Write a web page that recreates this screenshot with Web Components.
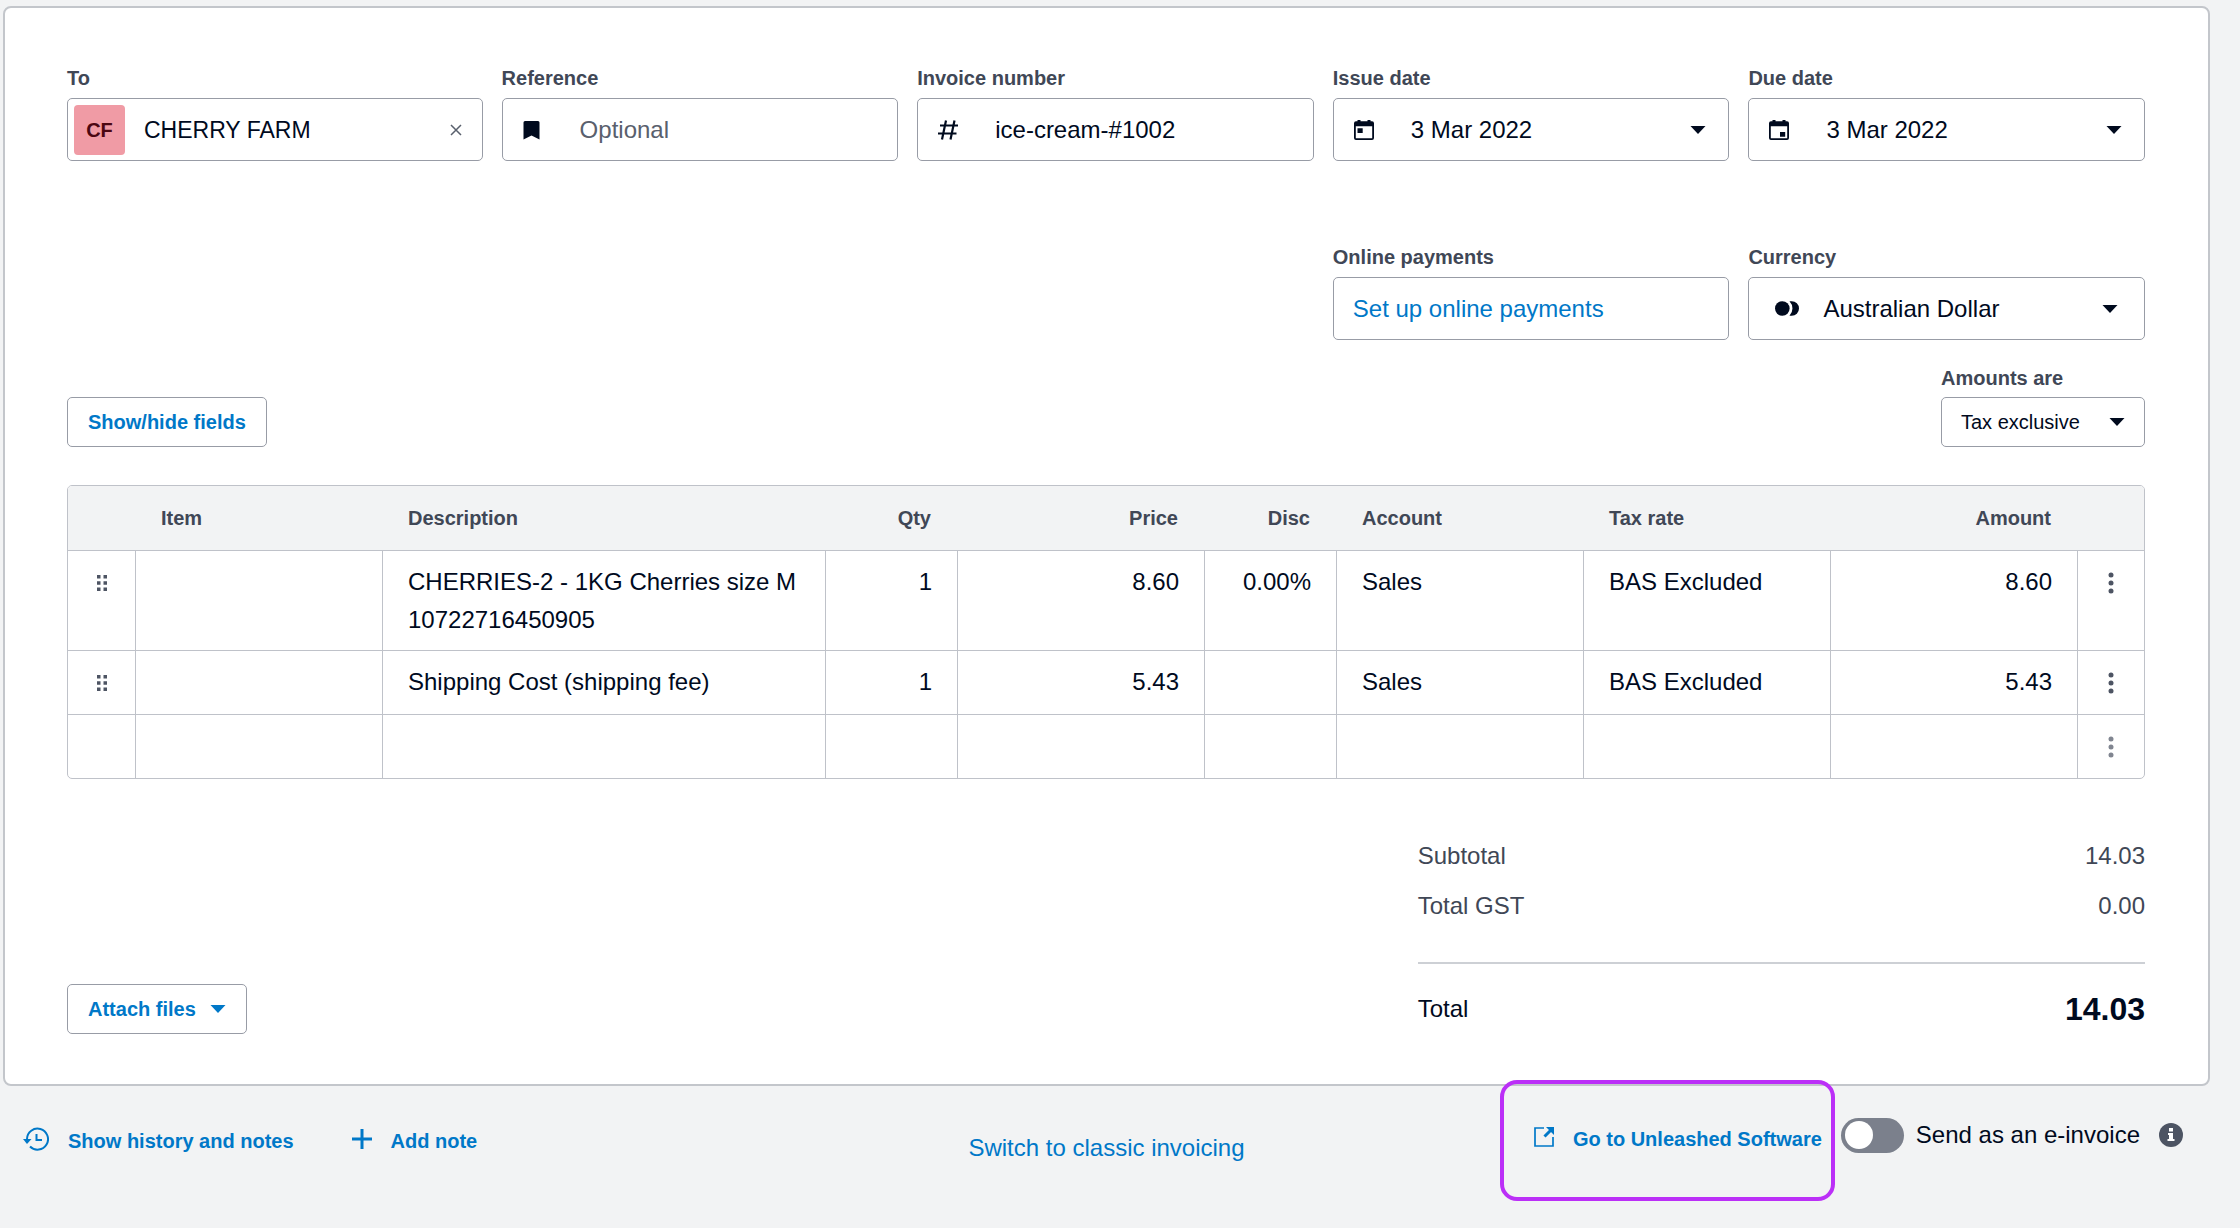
<!DOCTYPE html>
<html lang="en">
<head>
<meta charset="utf-8">
<meta name="viewport" content="width=device-width, initial-scale=1">
<title>Edit invoice</title>
<style>
  html {
    --ink: #000a1e;
    --label: #404756;
    --muted: #59606d;
    --blue: #0078c8;
    --field-line: #989ca6;
    --line: #bfc2c9;
    --surface: #f2f3f4;
    background: var(--surface);
  }
  body {
    margin: 0;
    font: 24px/38px "Liberation Sans", Arial, Helvetica, sans-serif;
    color: var(--ink);
  }
</style>
</head>
<body>
<invoice-page></invoice-page>

<script>
const ICONS = {
  bookmark: [17, 20, '<path fill="currentColor" d="M2 1h13a1.500 1.500 0 0 1 1.500 1.500V19.500L8.500 15.500 0.500 19.500V2.500A1.500 1.500 0 0 1 2 1z"/>'],
  hash: [20, 20, '<path fill="none" stroke="currentColor" stroke-width="2.200" d="M8 0.500 4 19.500M16.500 0.500 12.500 19.500M2 5.500h18M0 13.500h18.500"/>'],
  calendarStart: [20, 20, '<path fill="currentColor" fill-rule="evenodd" d="M3.500 0h3v1.300h7V0h3v1.300H18a2 2 0 0 1 2 2V18a2 2 0 0 1-2 2H2a2 2 0 0 1-2-2V3.300a2 2 0 0 1 2-2h1.500zM1.800 6.300v11.900h16.400V6.300zM3.500 8.300h5.200v4.700H3.500z"/>'],
  calendarEnd: [20, 20, '<path fill="currentColor" fill-rule="evenodd" d="M3.500 0h3v1.300h7V0h3v1.300H18a2 2 0 0 1 2 2V18a2 2 0 0 1-2 2H2a2 2 0 0 1-2-2V3.300a2 2 0 0 1 2-2h1.500zM1.800 6.300v11.900h16.400V6.300zM11 12h5.200v4.700H11z"/>'],
  coins: [24, 15, '<circle cx="7.300" cy="7.500" r="7.300" fill="currentColor"/><path fill="currentColor" d="M14.500 0.200h2.200a7.300 7.300 0 0 1 0 14.600h-2.200a10.500 10.500 0 0 0 0-14.600z"/>'],
  caret: [16, 8, '<path fill="currentColor" d="M0.500 0h15L8 8z"/>'],
  cross: [12, 12, '<path fill="none" stroke="currentColor" stroke-width="1.500" d="M1 1l10 10M11 1 1 11"/>'],
  grip: [10, 18, '<path fill="currentColor" d="M0 1h3.500v3.500H0zM6.500 1H10v3.500H6.500zM0 7.250h3.500v3.500H0zM6.500 7.250H10v3.500H6.500zM0 13.500h3.500V17H0zM6.500 13.500H10V17H6.500z"/>'],
  dots: [6, 22, '<circle cx="3" cy="3" r="2.500" fill="currentColor"/><circle cx="3" cy="11" r="2.500" fill="currentColor"/><circle cx="3" cy="19" r="2.500" fill="currentColor"/>'],
  history: [26, 28, '<path fill="none" stroke="currentColor" stroke-width="2" d="M4 13.500V12A10.500 10.500 0 1 1 7 19.500M13.500 7v6H19"/><path fill="currentColor" d="M0 12h8.500L4 17z"/>'],
  plus: [20, 24, '<path fill="none" stroke="currentColor" stroke-width="3" d="M10 0v20M0 10h20"/>'],
  external: [20, 24, '<path fill="none" stroke="currentColor" stroke-width="1.700" d="M10 1H1v18h18V10"/><path fill="none" stroke="currentColor" stroke-width="3" d="M10.500 9.500 17 3"/><path fill="currentColor" d="M12 0h8v8z"/>'],
  info: [24, 24, '<circle cx="12" cy="12" r="12" fill="currentColor"/><path fill="#fff" d="M10 5h4v3.500h-4zM9 10h5v6h1.500v2H8.500v-2H10v-4H9z"/>']
};

class UiElement extends HTMLElement {
  connectedCallback() {
    if (this.shadowRoot) return;
    this.attachShadow({ mode: 'open' }).innerHTML = this.render();
  }
  attr(name) { return this.getAttribute(name) || ''; }
}

customElements.define('ui-icon', class extends UiElement {
  render() {
    const [w, h, body] = ICONS[this.attr('name')];
    return `<style>:host{display:inline-flex;flex:none}svg{display:block}</style>
      <svg width="${w}" height="${h}" viewBox="0 0 ${w} ${h}" aria-hidden="true">${body}</svg>`;
  }
});

/* Labelled form field. kind: text | select | contact | link */
customElements.define('ui-field', class extends UiElement {
  control() {
    const value = this.attr('value');
    if (this.attr('kind') === 'select')
      return `<select id="c"><option>${value}</option></select>`;
    if (this.attr('kind') === 'link')
      return `<a id="c" href="#" aria-labelledby="l">${value}</a>`;
    return `<input id="c" type="text" value="${value}" placeholder="${this.attr('placeholder')}">`;
  }
  render() {
    const contact = this.attr('kind') === 'contact';
    const icon = this.attr('icon');
    return `<style>
      :host{display:flex;flex-direction:column;gap:6px;min-width:0}
      label{font-size:20px;line-height:28px;font-weight:bold;color:var(--label)}
      .box{box-sizing:border-box;display:grid;grid-template-columns:20px 58px minmax(0,1fr) auto 22px;
        align-items:center;height:63px;border:1px solid var(--field-line);border-radius:5px;background:#fff}
      .lead{grid-area:1/2;pointer-events:none;z-index:1}
      .tail{grid-area:1/4;pointer-events:none;z-index:1}
      #c{grid-area:1/1/2/6;align-self:stretch;box-sizing:border-box;width:100%;min-width:0;margin:0;border:0;
        background:none;font:inherit;color:inherit;padding:0 48px 0 19px;border-radius:5px;appearance:none}
      .icon #c{padding-left:77px}
      input::placeholder{color:var(--muted);opacity:1}
      a{display:flex;align-items:center}
      a#c{color:var(--blue);text-decoration:none}
      .contact{grid-template-columns:6px 51px minmax(0,1fr) auto 20px}
      .contact #c{padding-left:76px;font-size:23px}
      .avatar{grid-area:1/2;height:50px;border-radius:4px;background:#f09ba5;color:#4b0712;
        font-size:20px;line-height:50px;font-weight:bold;text-align:center}
      .clear{grid-area:1/4;border:0;background:none;padding:0;color:var(--muted);display:flex;z-index:1}
      :host([kind=select]) .box{grid-template-columns:26px 52px minmax(0,1fr) auto 26px}
      :host([kind=select]) .icon #c{padding-left:74px}
      :host([size=small]) .box{height:50px;grid-template-columns:19px 0 minmax(0,1fr) auto 19px}
      :host([size=small]) #c{font-size:20px}
      :host([size=small]){gap:5px}
      </style>
      <label for="c" id="l">${this.attr('label')}</label>
      <div class="box ${icon ? 'icon' : ''} ${contact ? 'contact' : ''}">
        ${contact ? `<span class="avatar" aria-hidden="true">${this.attr('initials')}</span>` : ''}
        ${icon ? `<ui-icon class="lead" name="${icon}"></ui-icon>` : ''}
        ${this.control()}
        ${contact ? '<button class="clear" type="button" aria-label="Clear contact"><ui-icon name="cross"></ui-icon></button>' : ''}
        ${this.hasAttribute('caret') ? '<ui-icon class="tail" name="caret"></ui-icon>' : ''}
      </div>`;
  }
});

customElements.define('ui-button', class extends UiElement {
  render() {
    return `<style>:host{display:inline-flex}
      button{box-sizing:border-box;display:flex;align-items:center;gap:14px;height:50px;padding:0 20px;
        border:1px solid var(--field-line);border-radius:5px;background:#fff;color:var(--blue);
        font:bold 20px/28px "Liberation Sans",Arial,sans-serif}
      </style><button type="button"><slot></slot></button>`;
  }
});

customElements.define('ui-link', class extends UiElement {
  render() {
    return `<style>:host{display:inline-flex}
      a{display:flex;align-items:center;gap:19px;color:var(--blue);text-decoration:none;
        font-size:20px;line-height:28px;font-weight:bold}
      </style><a href="#"><ui-icon name="${this.attr('icon')}"></ui-icon><slot></slot></a>`;
  }
});

customElements.define('invoice-lines', class extends UiElement {
  render() {
    const lines = [
      { description: 'CHERRIES-2 - 1KG Cherries size M<br>10722716450905', qty: '1', price: '8.60', disc: '0.00%', account: 'Sales', tax: 'BAS Excluded', amount: '8.60' },
      { description: 'Shipping Cost (shipping fee)', qty: '1', price: '5.43', disc: '', account: 'Sales', tax: 'BAS Excluded', amount: '5.43' },
      null
    ];
    const row = l => {
      const v = l || { description: '', qty: '', price: '', disc: '', account: '', tax: '', amount: '' };
      return `<tr class="${l ? '' : 'blank'}">
        <td class="tool">${l ? '<button type="button" aria-label="Move line"><ui-icon name="grip"></ui-icon></button>' : ''}</td>
        <td></td><td>${v.description}</td><td class="n">${v.qty}</td><td class="n">${v.price}</td>
        <td class="n">${v.disc}</td><td>${v.account}</td><td>${v.tax}</td><td class="n">${v.amount}</td>
        <td class="tool"><button type="button" aria-label="Line options"><ui-icon name="dots"></ui-icon></button></td></tr>`;
    };
    return `<style>
      :host{display:block}
      table{width:100%;table-layout:fixed;border-collapse:separate;border-spacing:0;
        border:1px solid var(--line);border-radius:5px;overflow:hidden}
      .tool-col{width:67px}.wide{width:247px}.narrow{width:132px}
      th{height:64px;box-sizing:border-box;padding:0 26px;background:var(--surface);color:var(--label);
        font-size:20px;line-height:28px;text-align:left}
      td{padding:12px 25px 11px;vertical-align:top;border-top:1px solid var(--line);height:40px}
      td+td{border-left:1px solid var(--line)}
      .n{text-align:right}
      .tool{padding-left:0;padding-right:0}
      button{display:flex;align-items:center;justify-content:center;width:100%;height:40px;
        border:0;padding:0;background:none;color:#4d5463}
      .blank button{color:#808590}
      </style>
      <table>
        <colgroup><col class="tool-col"><col class="wide"><col><col class="narrow"><col class="wide"><col class="narrow"><col class="wide"><col class="wide"><col class="wide"><col class="tool-col"></colgroup>
        <thead><tr><th></th><th>Item</th><th>Description</th><th class="n">Qty</th><th class="n">Price</th><th class="n">Disc</th><th>Account</th><th>Tax rate</th><th class="n">Amount</th><th></th></tr></thead>
        <tbody>${lines.map(row).join('')}</tbody>
      </table>`;
  }
});

customElements.define('invoice-totals', class extends UiElement {
  render() {
    return `<style>
      :host{display:block;width:35%}
      dl{margin:0}
      div{display:flex;justify-content:space-between;align-items:center;line-height:50px;color:var(--label)}
      dd{margin:0}
      .total{margin-top:31px;padding-top:20px;border-top:2px solid #cdd0d5;color:var(--ink)}
      .total dd{font-size:32px;font-weight:bold}
      </style>
      <dl><div><dt>Subtotal</dt><dd>14.03</dd></div>
      <div><dt>Total GST</dt><dd>0.00</dd></div>
      <div class="total"><dt>Total</dt><dd>14.03</dd></div></dl>`;
  }
});

customElements.define('ui-switch', class extends UiElement {
  render() {
    return `<style>
      :host{display:inline-flex}
      label{display:flex;align-items:center;gap:12px}
      input{appearance:none;box-sizing:border-box;width:63px;height:35px;margin:0;padding:3px 4px;border-radius:18px;background:#7b808c;display:flex;align-items:center}
      input::before{content:"";width:28px;height:28px;border-radius:50%;background:#fff}
      input:checked{background:var(--blue);justify-content:flex-end}
      </style><label for="s"><input id="s" type="checkbox" role="switch"><slot></slot></label>`;
  }
});

customElements.define('invoice-footer', class extends UiElement {
  render() {
    return `<style>
      :host{display:grid;grid-template-columns:minmax(0,1fr) auto minmax(0,1fr);align-items:start}
      .start{display:flex;gap:58px;padding:41px 0 0 20px}
      .centre{padding-top:43px;color:var(--blue);text-decoration:none}
      .end{display:flex;justify-content:flex-end;align-items:center;padding:30px 27px 0 0}
      .callout{position:relative;margin-right:19px;padding-top:8px}
      .callout::after{content:"";position:absolute;inset:-37px -13px -48px -34px;border:4px solid #bb2ff7;border-radius:17px;pointer-events:none}
      .info{border:0;padding:0;margin-left:19px;background:none;color:#4d5463;display:flex}
      </style>
      <div class="start"><ui-link icon="history">Show history and notes</ui-link><ui-link icon="plus">Add note</ui-link></div>
      <a class="centre" href="#">Switch to classic invoicing</a>
      <div class="end">
        <ui-link class="callout" icon="external">Go to Unleashed Software</ui-link>
        <ui-switch>Send as an e-invoice</ui-switch>
        <button class="info" type="button" aria-label="About e-invoices"><ui-icon name="info"></ui-icon></button>
      </div>`;
  }
});

customElements.define('invoice-page', class extends UiElement {
  render() {
    return `<style>
      :host{display:block;box-sizing:border-box;min-height:100vh;padding:6px 30px 0 3px}
      main{display:flex;flex-direction:column;border:2px solid #c3c6cb;border-radius:8px;background:#fff;padding:56px 63px 50px 62px}
      .fields{display:grid;grid-template-columns:minmax(0,415fr) repeat(4,minmax(0,396fr));gap:82px 19px}
      .payments{grid-column:4}
      .tools{display:flex;justify-content:space-between;align-items:flex-end;margin:24px 0 38px}
      .amounts{width:204px}
      .summary{display:flex;justify-content:space-between;align-items:flex-end;margin-top:52px}
      </style>
      <main>
        <div class="fields">
          <ui-field kind="contact" label="To" initials="CF" value="CHERRY FARM"></ui-field>
          <ui-field label="Reference" icon="bookmark" placeholder="Optional"></ui-field>
          <ui-field label="Invoice number" icon="hash" value="ice-cream-#1002"></ui-field>
          <ui-field label="Issue date" icon="calendarStart" value="3 Mar 2022" caret></ui-field>
          <ui-field label="Due date" icon="calendarEnd" value="3 Mar 2022" caret></ui-field>
          <ui-field class="payments" kind="link" label="Online payments" value="Set up online payments"></ui-field>
          <ui-field kind="select" label="Currency" icon="coins" value="Australian Dollar" caret></ui-field>
        </div>
        <div class="tools">
          <ui-button>Show/hide fields</ui-button>
          <ui-field class="amounts" kind="select" size="small" label="Amounts are" value="Tax exclusive" caret></ui-field>
        </div>
        <invoice-lines></invoice-lines>
        <div class="summary">
          <ui-button>Attach files <ui-icon name="caret"></ui-icon></ui-button>
          <invoice-totals></invoice-totals>
        </div>
      </main>
      <invoice-footer></invoice-footer>`;
  }
});
</script>
</body>
</html>
